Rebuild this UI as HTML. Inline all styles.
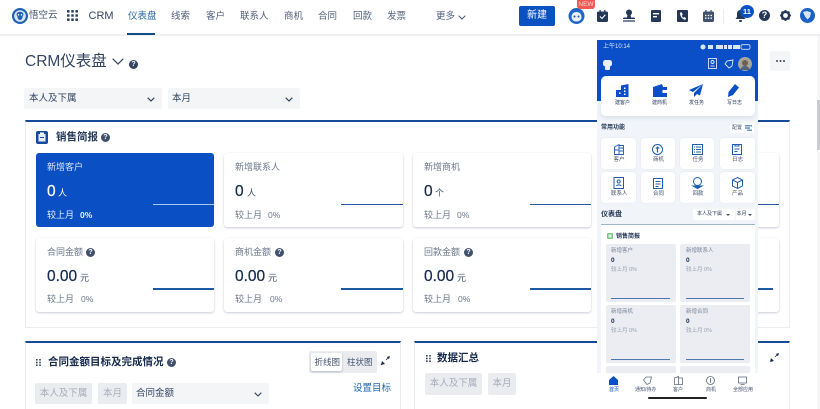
<!DOCTYPE html>
<html lang="zh">
<head>
<meta charset="utf-8">
<title>CRM仪表盘</title>
<style>
html,body{margin:0;padding:0;width:820px;height:409px;overflow:hidden;background:#fff}
body{position:relative;font-family:"Liberation Sans","Noto Sans CJK SC",sans-serif;color:#172b4d;filter:blur(.3px)}
.t{position:absolute;white-space:nowrap;line-height:1}
.b{position:absolute;box-sizing:border-box}
svg{position:absolute;overflow:visible}
.nav{font-size:9.5px;color:#505f79;top:12px}
.card{position:absolute;box-sizing:border-box;background:#fff;border-radius:3px;box-shadow:0 1px 2px rgba(9,30,66,.22),0 0 1px rgba(9,30,66,.06)}
.lb{font-size:9px;color:#6b778c}
.num{font-size:15.5px;color:#172b4d;-webkit-text-stroke:.25px #172b4d}
.unit{font-size:9px;color:#42526e}
.ln{position:absolute;height:1.5px;background:#1d5aa3}
.q{position:absolute;width:9px;height:9px;border-radius:50%;background:#42526e;color:#fff;font:bold 7px/9px "Liberation Sans",sans-serif;text-align:center}
.sec{position:absolute;box-sizing:border-box;background:#fff;border:1px solid #ebecf0;border-top:2px solid #164a9a}
.sel{position:absolute;box-sizing:border-box;background:#f4f5f7;border-radius:2px}
.dis{position:absolute;box-sizing:border-box;background:#ebecf0;border-radius:2px;color:#a5adba;font-size:9.5px;line-height:21px;text-align:center}
.pc{position:absolute;box-sizing:border-box;background:#fff;border-radius:4px;box-shadow:0 0 2px rgba(30,60,120,.06)}
.pl{font-size:5px;color:#42526e}
.mc{position:absolute;box-sizing:border-box;background:#ebedf2;border-radius:2px}
.ml{position:absolute;height:1px;background:#4d78ad}
</style>
</head>
<body>

<!-- top bar -->
<div class="b" style="left:0;top:34px;width:820px;height:2px;background:#eff0f3"></div>
<svg style="left:12px;top:8px" width="16" height="16" viewBox="0 0 16 16">
<circle cx="8" cy="8" r="8" fill="#1f62b5"/><circle cx="8" cy="8" r="5.8" fill="#d8e6f5"/>
<path d="M4.5 6.5a3.5 2.8 0 0 1 7 0c0 1-1 1.300-1 2.500 0 1.500-1 3-2.500 3s-2.500-1.500-2.500-3c0-1.200-1-1.500-1-2.500z" fill="#1f62b5"/>
<circle cx="6.500" cy="6.800" r=".8" fill="#fff"/><circle cx="9.500" cy="6.800" r=".8" fill="#fff"/>
</svg>
<span class="t" style="left:29px;top:11px;font-size:9.5px;color:#42526e">悟空云</span>
<svg style="left:67px;top:10px" width="11" height="11" viewBox="0 0 11 11" fill="#344563">
<rect x="0" y="0" width="2.600" height="2.600" rx=".6"/><rect x="4.200" y="0" width="2.600" height="2.600" rx=".6"/><rect x="8.400" y="0" width="2.600" height="2.600" rx=".6"/>
<rect x="0" y="4.200" width="2.600" height="2.600" rx=".6"/><rect x="4.200" y="4.200" width="2.600" height="2.600" rx=".6"/><rect x="8.400" y="4.200" width="2.600" height="2.600" rx=".6"/>
<rect x="0" y="8.400" width="2.600" height="2.600" rx=".6"/><rect x="4.200" y="8.400" width="2.600" height="2.600" rx=".6"/><rect x="8.400" y="8.400" width="2.600" height="2.600" rx=".6"/>
</svg>
<span class="t" style="left:88.500px;top:11px;font-size:11px;color:#344563">CRM</span>
<span class="t nav" style="left:128px;color:#2a6aa8">仪表盘</span>
<div class="b" style="left:127px;top:33px;width:28px;height:1.500px;background:#164a82"></div>
<span class="t nav" style="left:171px">线索</span>
<span class="t nav" style="left:206px">客户</span>
<span class="t nav" style="left:240px">联系人</span>
<span class="t nav" style="left:284px">商机</span>
<span class="t nav" style="left:318px">合同</span>
<span class="t nav" style="left:353px">回款</span>
<span class="t nav" style="left:387px">发票</span>
<span class="t nav" style="left:436px">更多</span>
<svg style="left:458px;top:15px" width="8" height="5" viewBox="0 0 8 5"><path d="M.7.7 4 4l3.300-3.300" fill="none" stroke="#42526e" stroke-width="1"/></svg>
<div class="b" style="left:519px;top:6px;width:36px;height:20px;background:#0a52c2;border-radius:2px;color:#fff;font-size:10px;line-height:20px;text-align:center">新建</div>

<!-- robot + NEW -->
<svg style="left:568px;top:8px" width="17" height="16" viewBox="0 0 17 16">
<circle cx="8.500" cy="8" r="8" fill="#1f66c8"/><path d="M3.500 9C3.500 6 5.500 4 8.500 4S13.500 6 13.500 9 11 13.500 8.500 13.500 3.500 12 3.500 9z" fill="#e8f0fb"/>
<circle cx="6.500" cy="8.500" r="1" fill="#1f4f96"/><circle cx="10.500" cy="8.500" r="1" fill="#1f4f96"/>
</svg>
<div class="b" style="left:577px;top:0;width:18px;height:9px;background:#ef5a52;border-radius:0 0 3px 3px;color:#ffd9d6;font-size:6.500px;line-height:9px;text-align:center">NEW</div>

<!-- toolbar icons -->
<svg style="left:597px;top:10px" width="11" height="12" viewBox="0 0 11 12"><rect y="1.500" width="11" height="10.500" rx="1.500" fill="#253858"/><rect x="2.500" y="0" width="1.300" height="3" fill="#253858"/><rect x="7.200" y="0" width="1.300" height="3" fill="#253858"/><path d="M3 6.500 5 8.500 8.300 4.800" fill="none" stroke="#fff" stroke-width="1.100"/></svg>
<svg style="left:623px;top:9px" width="12" height="13" viewBox="0 0 12 13" fill="#253858"><circle cx="6" cy="3.500" r="3"/><path d="M4.500 6h3l.5 2.500h3c.5 0 1 .5 1 1v.5H0v-.5c0-.5.500-1 1-1h3z"/><rect x="0" y="11" width="12" height="2" fill="#7a869a"/></svg>
<svg style="left:651px;top:10px" width="10" height="12" viewBox="0 0 10 12"><rect width="10" height="12" rx="1" fill="#253858"/><rect x="2" y="3" width="6" height="1.400" fill="#fff"/><rect x="2" y="6" width="4" height="1.400" fill="#fff"/></svg>
<svg style="left:677px;top:10px" width="11" height="12" viewBox="0 0 11 12"><rect width="11" height="12" rx="1" fill="#253858"/><path d="M3 2.500C3 7 5.500 9.500 8.500 9.800l.5-1.800-2-1-.8.800C5.500 7.300 5 6.300 4.800 5.500l.9-.7-.8-2.300z" fill="#fff"/></svg>
<svg style="left:703px;top:10px" width="11" height="12" viewBox="0 0 11 12" fill="#42526e"><rect y="1.500" width="11" height="10.500" rx="1.500"/><rect x="2.300" y="0" width="1.300" height="3"/><rect x="7.400" y="0" width="1.300" height="3"/><g fill="#fff"><rect x="2" y="4.800" width="1.500" height="1.300"/><rect x="4.750" y="4.800" width="1.500" height="1.300"/><rect x="7.500" y="4.800" width="1.500" height="1.300"/><rect x="2" y="7.500" width="1.500" height="1.300"/><rect x="4.750" y="7.500" width="1.500" height="1.300"/><rect x="7.500" y="7.500" width="1.500" height="1.300"/></g></svg>
<div class="b" style="left:723px;top:9px;width:1px;height:15px;background:#ebecf0"></div>
<svg style="left:735px;top:10px" width="11" height="12" viewBox="0 0 11 12" fill="#253858"><path d="M5.500 0C3 0 2 2 2 4v3L.5 9h10L9 7V4C9 2 8 0 5.500 0z"/><rect x="4" y="10" width="3" height="2" rx="1"/></svg>
<div class="b" style="left:740px;top:5px;width:14px;height:13px;border-radius:50%;background:#0a52c2;color:#fff;font:bold 7.500px/13px 'Liberation Sans',sans-serif;text-align:center">11</div>
<div class="b" style="left:759px;top:10px;width:11px;height:11px;border-radius:50%;background:#253858;color:#fff;font:bold 9px/11px 'Liberation Sans',sans-serif;text-align:center">?</div>
<svg style="left:780px;top:10px" width="11" height="11" viewBox="0 0 11 11"><circle cx="5.500" cy="5.500" r="3.600" fill="none" stroke="#253858" stroke-width="2.400"/><path d="M5.500 0v2M5.500 9v2M0 5.500h2M9 5.500h2M1.600 1.600 3 3M8 8l1.400 1.400M1.600 9.400 3 8M8 3l1.400-1.400" stroke="#253858" stroke-width="1.800"/></svg>
<svg style="left:800px;top:8px" width="15" height="15" viewBox="0 0 15 15"><circle cx="7.500" cy="7.500" r="7.500" fill="#1c62c6"/><path d="M3 4 7 3 11 4.500 10 9 7.500 11.500 5 8.500z" fill="#d7e5f7"/></svg>

<!-- page title -->
<span class="t" style="left:25px;top:54px;font-size:15.5px;color:#344563">CRM仪表盘</span>
<svg style="left:112px;top:58px" width="12" height="7" viewBox="0 0 12 7"><path d="M.7.700 6 6 11.300.700" fill="none" stroke="#344563" stroke-width="1.200"/></svg>
<div class="q" style="left:129px;top:60px;background:#344563">?</div>
<div class="sel" style="left:24px;top:88px;width:138px;height:21px"></div>
<span class="t" style="left:29px;top:94px;font-size:9.500px;color:#344563">本人及下属</span>
<svg style="left:147px;top:97px" width="8" height="5" viewBox="0 0 8 5"><path d="M.7.700 4 4 7.300.700" fill="none" stroke="#344563" stroke-width="1.200"/></svg>
<div class="sel" style="left:168px;top:88px;width:132px;height:21px"></div>
<span class="t" style="left:172px;top:94px;font-size:9.500px;color:#344563">本月</span>
<svg style="left:285px;top:97px" width="8" height="5" viewBox="0 0 8 5"><path d="M.7.700 4 4 7.300.700" fill="none" stroke="#344563" stroke-width="1.200"/></svg>
<div class="b" style="left:770px;top:51px;width:20px;height:20px;background:#f4f5f7;border-radius:2px"></div>
<svg style="left:776px;top:60px" width="9" height="2" viewBox="0 0 9 2" fill="#344563"><circle cx="1" cy="1" r="1"/><circle cx="4.500" cy="1" r="1"/><circle cx="8" cy="1" r="1"/></svg>

<!-- sales section -->
<div class="sec" style="left:25px;top:120px;width:765px;height:208px"></div>
<svg style="left:36px;top:131px" width="12" height="13" viewBox="0 0 12 13"><rect width="12" height="13" rx="2" fill="#164a9a"/><rect x="2.500" y="3" width="7" height="7.500" fill="#e4edf8"/><rect x="4" y="1.500" width="4" height="2" fill="#fff"/><rect x="4" y="6" width="4" height="1" fill="#164a9a"/></svg>
<span class="t" style="left:56px;top:132px;font-size:10.500px;font-weight:bold;color:#253858">销售简报</span>
<div class="q" style="left:101px;top:133px">?</div>

<!-- row 1 -->
<div class="card" style="left:36px;top:153px;width:178px;height:74px;background:#0a4fc4;box-shadow:none"></div>
<span class="t lb" style="left:47px;top:163px;color:#dbe6fa">新增客户</span>
<span class="t num" style="left:47px;top:184px;color:#fff;-webkit-text-stroke:.25px #fff">0</span>
<span class="t unit" style="left:58px;top:189px;color:#fff">人</span>
<span class="t lb" style="left:47px;top:211px;color:#eaf1ff">较上月</span>
<span class="t" style="left:80px;top:211px;font-size:8.500px;font-weight:bold;color:#eaf1ff">0%</span>
<div class="ln" style="left:153px;top:203.500px;width:61px;background:#a8c8f2"></div>

<div class="card" style="left:224px;top:153px;width:179px;height:74px"></div>
<span class="t lb" style="left:235px;top:163px">新增联系人</span>
<span class="t num" style="left:235px;top:184px">0</span>
<span class="t unit" style="left:247px;top:189px">人</span>
<span class="t lb" style="left:235px;top:211px">较上月</span>
<span class="t" style="left:268px;top:211px;font-size:8.500px;color:#6b778c">0%</span>
<div class="ln" style="left:341px;top:203.500px;width:62px"></div>

<div class="card" style="left:413px;top:153px;width:178px;height:74px"></div>
<span class="t lb" style="left:424px;top:163px">新增商机</span>
<span class="t num" style="left:424px;top:184px">0</span>
<span class="t unit" style="left:435px;top:189px">个</span>
<span class="t lb" style="left:424px;top:211px">较上月</span>
<span class="t" style="left:457px;top:211px;font-size:8.500px;color:#6b778c">0%</span>
<div class="ln" style="left:530px;top:203.500px;width:61px"></div>

<div class="card" style="left:602px;top:153px;width:177px;height:74px"></div>
<div class="ln" style="left:718px;top:203.500px;width:61px"></div>

<!-- row 2 -->
<div class="card" style="left:36px;top:238px;width:178px;height:74px"></div>
<span class="t lb" style="left:47px;top:248px">合同金额</span>
<div class="q" style="left:86px;top:247.500px">?</div>
<span class="t num" style="left:47px;top:268.500px">0.00</span>
<span class="t unit" style="left:80px;top:274px">元</span>
<span class="t lb" style="left:47px;top:295px">较上月</span>
<span class="t" style="left:81px;top:295px;font-size:8.500px;color:#6b778c">0%</span>
<div class="ln" style="left:153px;top:288px;width:61px"></div>

<div class="card" style="left:224px;top:238px;width:179px;height:74px"></div>
<span class="t lb" style="left:235px;top:248px">商机金额</span>
<div class="q" style="left:275px;top:247.500px">?</div>
<span class="t num" style="left:235px;top:268.500px">0.00</span>
<span class="t unit" style="left:268px;top:274px">元</span>
<span class="t lb" style="left:235px;top:295px">较上月</span>
<span class="t" style="left:270px;top:295px;font-size:8.500px;color:#6b778c">0%</span>
<div class="ln" style="left:341px;top:288px;width:62px"></div>

<div class="card" style="left:413px;top:238px;width:178px;height:74px"></div>
<span class="t lb" style="left:424px;top:248px">回款金额</span>
<div class="q" style="left:464px;top:247.500px">?</div>
<span class="t num" style="left:424px;top:268.500px">0.00</span>
<span class="t unit" style="left:457px;top:274px">元</span>
<span class="t lb" style="left:424px;top:295px">较上月</span>
<span class="t" style="left:458px;top:295px;font-size:8.500px;color:#6b778c">0%</span>
<div class="ln" style="left:530px;top:288px;width:61px"></div>

<div class="card" style="left:602px;top:238px;width:177px;height:74px"></div>
<div class="ln" style="left:712px;top:288px;width:61px"></div>

<!-- bottom left section -->
<div class="sec" style="left:25px;top:341px;width:376px;height:80px"></div>
<svg style="left:36px;top:359px" width="5" height="7" viewBox="0 0 5 7" fill="#344563"><rect width="1.600" height="1.600"/><rect x="3.200" width="1.600" height="1.600"/><rect y="2.700" width="1.600" height="1.600"/><rect x="3.200" y="2.700" width="1.600" height="1.600"/><rect y="5.400" width="1.600" height="1.600"/><rect x="3.200" y="5.400" width="1.600" height="1.600"/></svg>
<span class="t" style="left:48px;top:357px;font-size:10.500px;font-weight:bold;color:#172b4d">合同金额目标及完成情况</span>
<div class="q" style="left:167px;top:358px">?</div>
<div class="b" style="left:309px;top:351px;width:68px;height:22px;background:#ebecf0;border-radius:2px"></div>
<div class="b" style="left:311px;top:353px;width:31px;height:18px;background:#fff;border-radius:2px;box-shadow:0 1px 2px rgba(9,30,66,.25)"></div>
<span class="t" style="left:314.500px;top:357.500px;font-size:8.500px;color:#42526e">折线图</span>
<span class="t" style="left:347px;top:357.500px;font-size:8.500px;color:#42526e">柱状图</span>
<svg style="left:381px;top:356px" width="9" height="9" viewBox="0 0 9 9" fill="#172b4d"><path d="M0 9 1 5l3 3z"/><path d="M0 9 2.500 6.500" stroke="#172b4d"/><path d="M9 0 8 3.200 5.800 1z"/><path d="M5 4 8 1" stroke="#172b4d" stroke-width=".8"/></svg>
<div class="dis" style="left:35px;top:383px;width:57px">本人及下属</div>
<div class="dis" style="left:98px;top:383px;width:29px">本月</div>
<div class="sel" style="left:132px;top:383px;width:137px;height:21px"></div>
<span class="t" style="left:136px;top:389px;font-size:9.500px;color:#344563">合同金额</span>
<svg style="left:254px;top:392px" width="8" height="5" viewBox="0 0 8 5"><path d="M.7.700 4 4 7.300.700" fill="none" stroke="#344563" stroke-width="1.100"/></svg>
<span class="t" style="left:353px;top:384px;font-size:9.500px;color:#1f66ad">设置目标</span>

<!-- bottom right section -->
<div class="sec" style="left:414px;top:341px;width:376px;height:80px"></div>
<svg style="left:426px;top:355px" width="5" height="7" viewBox="0 0 5 7" fill="#344563"><rect width="1.600" height="1.600"/><rect x="3.200" width="1.600" height="1.600"/><rect y="2.700" width="1.600" height="1.600"/><rect x="3.200" y="2.700" width="1.600" height="1.600"/><rect y="5.400" width="1.600" height="1.600"/><rect x="3.200" y="5.400" width="1.600" height="1.600"/></svg>
<span class="t" style="left:437px;top:353px;font-size:10.500px;font-weight:bold;color:#172b4d">数据汇总</span>
<div class="dis" style="left:425px;top:373px;width:57px;height:22px">本人及下属</div>
<div class="dis" style="left:488px;top:373px;width:28px;height:22px">本月</div>
<svg style="left:770px;top:353px" width="9" height="9" viewBox="0 0 9 9" fill="#172b4d"><path d="M0 9 1 5l3 3z"/><path d="M9 0 8 3.200 5.800 1z"/><path d="M5 4 8 1" stroke="#172b4d" stroke-width=".8"/></svg>

<!-- scrollbar -->
<div class="b" style="left:817px;top:36px;width:3px;height:373px;background:#f7f7f8"></div>
<div class="b" style="left:817px;top:100px;width:3px;height:50px;background:#c9cbcf"></div>

<!-- phone overlay -->
<div class="b" style="left:597px;top:40px;width:161px;height:369px;background:#f1f4f9;overflow:hidden"></div>
<div class="b" style="left:597px;top:40px;width:161px;height:61px;background:#0a4fc8"></div>
<span class="t" style="left:603px;top:44px;font-size:6px;color:#dbe6fa">上午10:14</span>
<svg style="left:699px;top:44px" width="52" height="6" viewBox="0 0 52 6" fill="#dbe6fa">
<circle cx="4" cy="3" r="2.500"/><rect x="9" y="1" width="5" height="4"/><rect x="17" y="1" width="7" height="4"/><rect x="25" y="1" width="3" height="4"/><rect x="29" y="1" width="4" height="4"/><rect x="34" y="1" width="7" height="4"/>
<rect x="42" y=".7" width="9" height="4.600" rx="1.500" fill="none" stroke="#dbe6fa" stroke-width=".8"/></svg>
<svg style="left:602px;top:60px" width="11" height="10" viewBox="0 0 11 10" fill="#e9f0fb"><rect x="1" width="9" height="6.500" rx="2.500"/><rect x="3" y="6" width="5" height="4" rx="1"/></svg>
<svg style="left:708px;top:58px" width="9" height="11" viewBox="0 0 9 11" fill="none" stroke="#dbe6fa" stroke-width=".9"><rect x=".5" y=".5" width="8" height="10"/><circle cx="4.500" cy="4" r="1.500"/><path d="M2.500 8h4"/></svg>
<svg style="left:724px;top:59px" width="10" height="10" viewBox="0 0 10 10" fill="none" stroke="#dbe6fa" stroke-width=".9"><path d="M9 1 3 2 1 5l4 4 3-2z"/></svg>
<svg style="left:738px;top:57px" width="14" height="14" viewBox="0 0 14 14"><circle cx="7" cy="7" r="7" fill="#a8a599"/><circle cx="7" cy="6" r="3" fill="#6f5f55"/><path d="M2 13c1-3 3-4 5-4s4 1 5 4z" fill="#50647e"/></svg>

<div class="b" style="left:601px;top:76px;width:154px;height:40px;background:#fff;border-radius:5px;box-shadow:0 2px 4px rgba(30,60,120,.1)"></div>
<svg style="left:616px;top:84px" width="13" height="13" viewBox="0 0 13 13" fill="#0a4fc8"><path d="M0 6h5V1.500L12.500 0v13H0z"/><g fill="#fff"><rect x="8" y="3.500" width="1.500" height="1.500"/><rect x="8" y="6.500" width="1.500" height="1.500"/><rect x="3" y="8.500" width="1.500" height="1.500"/><rect x="8" y="9.500" width="1.500" height="1.500"/></g></svg>
<svg style="left:652.500px;top:84px" width="14" height="13" viewBox="0 0 14 13" fill="#0a4fc8"><path d="M0 3 9 0l1 3h4v10H0z"/><rect x="9.500" y="6" width="4.500" height="3" fill="#fff"/></svg>
<svg style="left:689px;top:84px" width="14" height="13" viewBox="0 0 14 13" fill="#0a4fc8"><path d="M14 0 0 6l4 2zM14 0 5 9v4l3-3 3 1.500z"/></svg>
<svg style="left:727px;top:84px" width="12" height="13" viewBox="0 0 12 13" fill="#0a4fc8"><path d="M8 0l4 3.500-6 7.500L1 13l.5-5z"/></svg>
<span class="t pl" style="left:615px;top:101px;color:#253858">建客户</span>
<span class="t pl" style="left:652px;top:101px;color:#253858">建商机</span>
<span class="t pl" style="left:689px;top:101px;color:#253858">发任务</span>
<span class="t pl" style="left:727px;top:101px;color:#253858">写日志</span>

<span class="t" style="left:601px;top:125px;font-size:6px;font-weight:bold;color:#253858">常用功能</span>
<div class="b" style="left:730px;top:123px;width:24px;height:10px;background:#fff;border-radius:2px"></div>
<span class="t pl" style="left:732px;top:125.500px">配置</span>
<svg style="left:745px;top:125px" width="7" height="6" viewBox="0 0 7 6" fill="#6d92c4"><rect width="7" height="1.500"/><rect y="2.300" width="5" height="1.500"/><rect x="2" y="4.500" width="5" height="1.500"/></svg>

<!-- phone grid -->
<div class="pc" style="left:601px;top:138px;width:35px;height:31px"></div>
<div class="pc" style="left:641px;top:138px;width:34px;height:31px"></div>
<div class="pc" style="left:680px;top:138px;width:34px;height:31px"></div>
<div class="pc" style="left:720px;top:138px;width:35px;height:31px"></div>
<div class="pc" style="left:601px;top:172px;width:35px;height:31px"></div>
<div class="pc" style="left:641px;top:172px;width:34px;height:31px"></div>
<div class="pc" style="left:680px;top:172px;width:34px;height:31px"></div>
<div class="pc" style="left:720px;top:172px;width:35px;height:31px"></div>
<svg style="left:614px;top:144px" width="10" height="11" viewBox="0 0 10 11" fill="none" stroke="#1f5fa8" stroke-width=".9"><path d="M.5 3 5 .5v10H.5zM5 1.500h4.500v9H5M0 6h5M5 4h4.500M5 7h4.500"/></svg>
<svg style="left:652px;top:144px" width="11" height="11" viewBox="0 0 11 11" fill="none" stroke="#1f5fa8"><circle cx="5.500" cy="5.500" r="5"/><path d="M5.500 2.500v6M3.800 4h3.400" stroke-width="1.300"/></svg>
<svg style="left:692px;top:144px" width="11" height="11" viewBox="0 0 11 11" fill="none" stroke="#1f5fa8"><rect x=".5" y=".5" width="10" height="10"/><path d="M4 3h5M2 3h1M4 5.500h5M2 5.500h1M4 8h5M2 8h1"/></svg>
<svg style="left:732px;top:143px" width="10" height="12" viewBox="0 0 10 12" fill="none" stroke="#1f5fa8"><rect x=".5" y="1.500" width="9" height="10"/><path d="M3 1v2h4V1M2.500 6h5M2.500 8.500h3"/></svg>
<svg style="left:613px;top:177px" width="11" height="12" viewBox="0 0 11 12" fill="none" stroke="#1f5fa8"><rect x="1" y=".5" width="9.500" height="11"/><circle cx="5.700" cy="4.500" r="1.500"/><path d="M3.500 9c.5-1.500 4-1.500 4.500 0"/></svg>
<svg style="left:653px;top:178px" width="10" height="11" viewBox="0 0 10 11" fill="none" stroke="#1f5fa8"><rect x=".5" y=".5" width="9" height="10"/><path d="M2.500 3.500h5M2.500 6h5M2.500 8.500h3"/></svg>
<svg style="left:692px;top:177px" width="11" height="12" viewBox="0 0 11 12" fill="none" stroke="#1f5fa8"><circle cx="5.500" cy="4.500" r="4"/><path d="M1 9h9l-4.500 2.500z" fill="#1f5fa8"/></svg>
<svg style="left:732px;top:177px" width="11" height="12" viewBox="0 0 11 12" fill="none" stroke="#1f5fa8"><path d="M5.500.5l5 2.500v6l-5 2.500-5-2.500V3zM.5 3l5 2.500L10.500 3M5.500 5.500v6"/></svg>
<span class="t pl" style="left:613.500px;top:158px;font-size:5.500px">客户</span>
<span class="t pl" style="left:653px;top:158px;font-size:5.500px">商机</span>
<span class="t pl" style="left:692.500px;top:158px;font-size:5.500px">任务</span>
<span class="t pl" style="left:732px;top:158px;font-size:5.500px">日志</span>
<span class="t pl" style="left:611px;top:192px;font-size:5.500px">联系人</span>
<span class="t pl" style="left:653px;top:192px;font-size:5.500px">合同</span>
<span class="t pl" style="left:692.500px;top:192px;font-size:5.500px">回款</span>
<span class="t pl" style="left:732px;top:192px;font-size:5.500px">产品</span>

<span class="t" style="left:601px;top:211px;font-size:7px;font-weight:bold;color:#253858">仪表盘</span>
<div class="b" style="left:693px;top:209px;width:42px;height:11px;background:#fff;border-radius:2px"></div>
<span class="t" style="left:697px;top:212px;font-size:5px;color:#253858">本人及下属</span>
<div class="b" style="left:726px;top:214px;border:2px solid transparent;border-top:2px solid #42526e"></div>
<div class="b" style="left:736px;top:209px;width:19px;height:11px;background:#fff;border-radius:2px"></div>
<span class="t" style="left:736.500px;top:212px;font-size:5px;color:#253858">本月</span>
<div class="b" style="left:748px;top:214px;border:2px solid transparent;border-top:2px solid #42526e"></div>

<div class="b" style="left:601px;top:224px;width:154px;height:149px;background:#fff;border-top:1.500px solid #9db4d2"></div>
<svg style="left:607px;top:233px" width="6" height="6" viewBox="0 0 6 6"><rect width="6" height="6" rx="1" fill="#7cc788"/><rect x="1.500" y="1.500" width="3" height="3" fill="#e2f4e5"/></svg>
<span class="t" style="left:616px;top:233.500px;font-size:6px;font-weight:bold;color:#253858">销售简报</span>

<div class="mc" style="left:606px;top:244px;width:70px;height:58px"></div>
<div class="mc" style="left:680px;top:244px;width:70px;height:58px"></div>
<div class="mc" style="left:606px;top:305px;width:70px;height:58px"></div>
<div class="mc" style="left:680px;top:305px;width:70px;height:58px"></div>
<div class="mc" style="left:606px;top:366px;width:70px;height:10px"></div>
<div class="mc" style="left:680px;top:366px;width:70px;height:10px"></div>
<span class="t pl" style="left:611px;top:249px;font-size:5.500px;color:#7a869a">新增客户</span>
<span class="t" style="left:611px;top:258px;font-size:6.500px;font-weight:bold;color:#172b4d">0</span>
<span class="t pl" style="left:611px;top:268px;font-size:5.500px;color:#97a0af">较上月 0%</span>
<div class="ml" style="left:611px;top:298px;width:59px"></div>
<span class="t pl" style="left:686px;top:249px;font-size:5.500px;color:#7a869a">新增联系人</span>
<span class="t" style="left:686px;top:258px;font-size:6.500px;font-weight:bold;color:#172b4d">0</span>
<span class="t pl" style="left:686px;top:268px;font-size:5.500px;color:#97a0af">较上月 0%</span>
<div class="ml" style="left:686px;top:298px;width:58px"></div>
<span class="t pl" style="left:611px;top:310px;font-size:5.500px;color:#7a869a">新增商机</span>
<span class="t" style="left:611px;top:319px;font-size:6.500px;font-weight:bold;color:#172b4d">0</span>
<span class="t pl" style="left:611px;top:329px;font-size:5.500px;color:#97a0af">较上月 0%</span>
<div class="ml" style="left:611px;top:359px;width:59px"></div>
<span class="t pl" style="left:686px;top:310px;font-size:5.500px;color:#7a869a">新增合同</span>
<span class="t" style="left:686px;top:319px;font-size:6.500px;font-weight:bold;color:#172b4d">0</span>
<span class="t pl" style="left:686px;top:329px;font-size:5.500px;color:#97a0af">较上月 0%</span>
<div class="ml" style="left:686px;top:359px;width:58px"></div>

<!-- phone tab bar -->
<div class="b" style="left:597px;top:373px;width:161px;height:36px;background:#fff"></div>
<svg style="left:609px;top:376px" width="9" height="9" viewBox="0 0 9 9" fill="#0a4fc8"><path d="M0 4 4.500 0 9 4v5H0z"/></svg>
<svg style="left:643px;top:376px" width="9" height="9" viewBox="0 0 9 9" fill="none" stroke="#5e6c84" stroke-width=".8"><path d="M8.500 1 3 1 .5 4 4 8.500 7 7z"/></svg>
<svg style="left:674px;top:376px" width="9" height="9" viewBox="0 0 9 9" fill="none" stroke="#5e6c84" stroke-width=".8"><path d="M.5 2 4.500.5v8H.5zM4.500 2h4v6.500h-4"/></svg>
<svg style="left:706px;top:376px" width="9" height="9" viewBox="0 0 9 9" fill="none" stroke="#5e6c84" stroke-width=".8"><circle cx="4.500" cy="4.500" r="4"/><path d="M4.500 2v5"/></svg>
<svg style="left:738px;top:376px" width="9" height="9" viewBox="0 0 9 9" fill="none" stroke="#5e6c84" stroke-width=".8"><rect x=".5" y="1" width="8" height="6"/><path d="M2.500 8.500h4"/></svg>
<span class="t pl" style="left:609px;top:387.500px;color:#0a4fc8">首页</span>
<span class="t pl" style="left:635px;top:387.500px">通知/待办</span>
<span class="t pl" style="left:673px;top:387.500px">客户</span>
<span class="t pl" style="left:706px;top:387.500px">商机</span>
<span class="t pl" style="left:733px;top:387.500px">全部应用</span>
<div class="b" style="left:648px;top:397px;width:59px;height:1.500px;background:#222;border-radius:1px"></div>

</body>
</html>
